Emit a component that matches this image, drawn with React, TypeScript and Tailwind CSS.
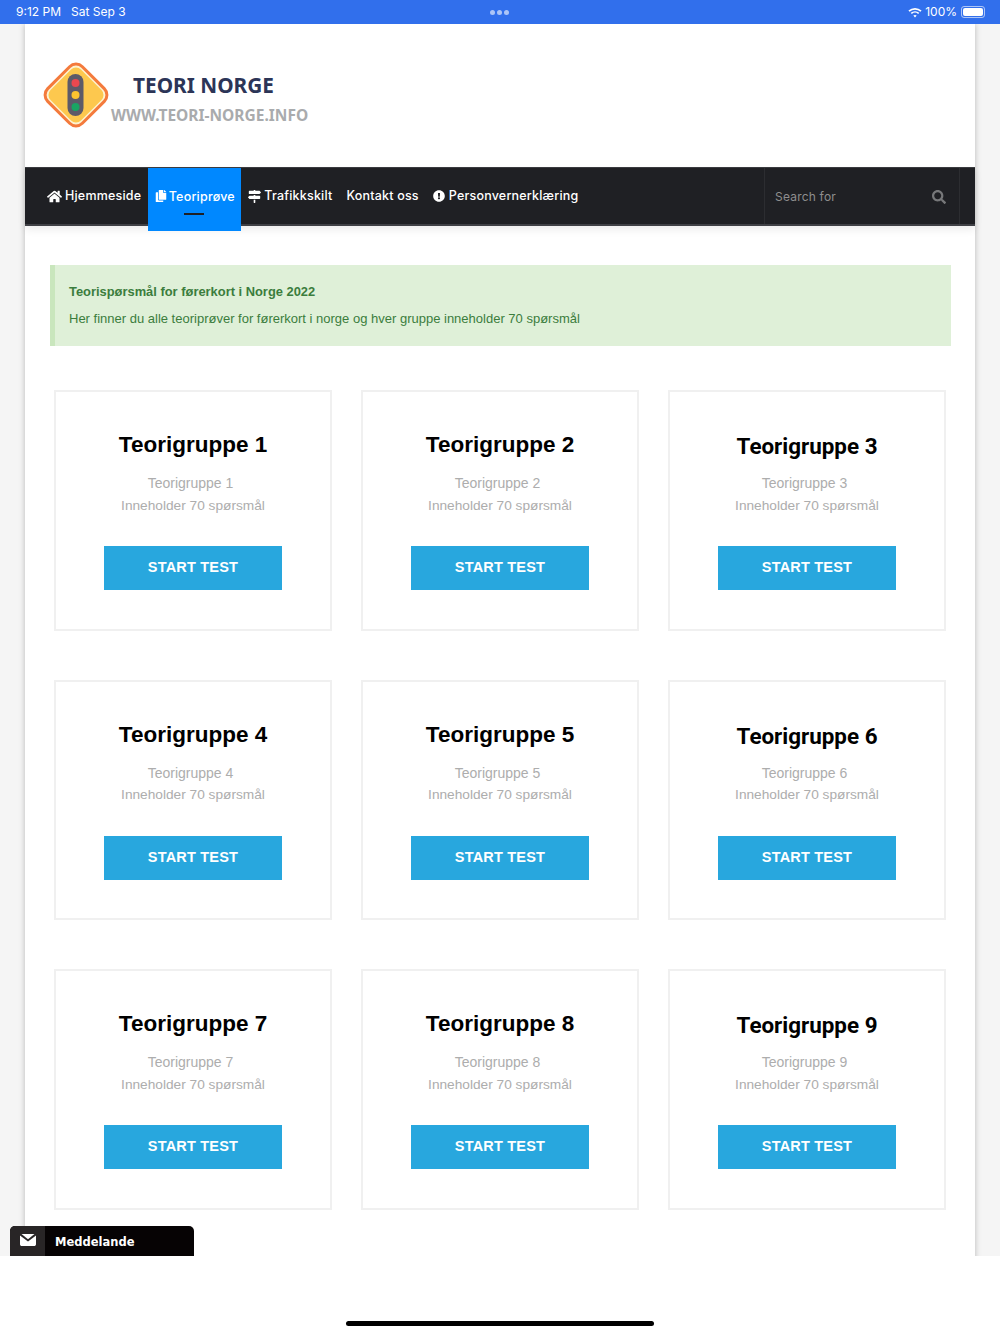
import React from 'react';
import { FaHome, FaCopy, FaMapSigns, FaExclamationCircle, FaSearch } from 'react-icons/fa';

const groups = [1, 2, 3, 4, 5, 6, 7, 8, 9];

const Logo = () => (
  <svg width="68" height="66" viewBox="0 0 68 66">
    <rect x="9.5" y="8.5" width="49" height="49" rx="9" transform="rotate(45 34 33)" fill="#fdf3d0" stroke="#f47a3c" strokeWidth="3" />
    <rect x="12.5" y="11.5" width="43" height="43" rx="7" transform="rotate(45 34 33)" fill="#fdc84e" />
    <rect x="25.5" y="12" width="16" height="42" rx="8" fill="#5d5a68" />
    <circle cx="33.5" cy="21" r="4" fill="#e8484f" />
    <circle cx="33.5" cy="33" r="4" fill="#fcc42f" />
    <circle cx="33.5" cy="45" r="4" fill="#19a463" />
  </svg>
);

const Card = ({ n, col }: { n: number; col: number }) => (
  <div className="w-[278px] h-[240.5px] border-2 border-[#f0f0f0] bg-white flex flex-col items-center">
    <h2
      className={
        col === 2
          ? "mt-[28px] h-[52px] leading-[52px] text-[22.4px] font-bold text-black font-['Roboto',sans-serif]"
          : "mt-[27px] h-[53px] leading-[52px] text-[22.5px] font-bold text-black font-['Liberation_Sans',sans-serif]"
      }
    >
      Teorigruppe {n}
    </h2>
    <p className="pr-[5px] text-[14px] leading-[22.5px] text-[#adadad] font-['Liberation_Sans',sans-serif]">Teorigruppe {n}</p>
    <p className="text-[13.7px] leading-[22.5px] text-[#adadad] font-['Liberation_Sans',sans-serif]">Inneholder 70 spørsmål</p>
    <button className="mt-[29px] w-[178px] h-[44px] bg-[#28a7de] text-white text-[14.5px] tracking-[0.2px] font-bold font-['Liberation_Sans',sans-serif]">START TEST</button>
  </div>
);

export default function App() {
  return (
    <div className="w-[1000px] h-[1334px] bg-white relative overflow-hidden font-['Inter',sans-serif]">
      <div className="h-[24px] bg-[#316fec] text-white text-[12px] flex items-center justify-between pl-[16px] pr-[15px] relative">
        <div className="flex gap-[10px]">
          <span>9:12 PM</span>
          <span>Sat Sep 3</span>
        </div>
        <div className="absolute left-[490px] top-[10px] flex gap-[2px]">
          <span className="w-[5px] h-[5px] rounded-full bg-white/60" />
          <span className="w-[5px] h-[5px] rounded-full bg-white/60" />
          <span className="w-[5px] h-[5px] rounded-full bg-white/60" />
        </div>
        <div className="flex items-center gap-[3px]">
          <svg width="14" height="11" viewBox="0 0 14 11" fill="none" stroke="white" strokeWidth="1.7">
            <path d="M1 4.2C4.4 1 9.6 1 13 4.2" />
            <path d="M3.3 6.4C5.4 4.5 8.6 4.5 10.7 6.4" />
            <path d="M7 10.5L5.3 8.6C6.3 7.8 7.7 7.8 8.7 8.6Z" fill="white" stroke="none" />
          </svg>
          <span>100%</span>
          <div className="ml-[1px] w-[24px] h-[12px] rounded-[3px] border border-white/60 p-[1px] flex">
            <div className="flex-1 rounded-[2px] bg-white" />
          </div>
        </div>
      </div>

      <div className="h-[1232px] bg-[#f5f5f5] overflow-hidden">
        <div className="w-[950px] h-[1240px] mx-auto bg-white shadow-[0_0_6px_rgba(0,0,0,0.25)]">
          <div className="h-[143px] flex relative">
            <div className="ml-[17px] mt-[38px]"><Logo /></div>
            <div className="absolute left-[86px] top-[46px] w-[198px] font-['Noto_Sans',sans-serif]">
              <div className="ml-[22px] text-[20.8px] leading-[30px] font-bold text-[#2c3557]">TEORI NORGE</div>
              <div className="text-[15.5px] leading-[30px] font-bold text-[#a9abad] whitespace-nowrap">WWW.TEORI-NORGE.INFO</div>
            </div>
          </div>

          <nav className="h-[59px] bg-[#1f2024] border-t border-[#3a3b3f] border-b-2 border-b-[#3f4045] flex relative shadow-[0_4px_8px_rgba(0,0,0,0.07)] text-white text-[12.5px] font-medium tracking-[0.2px]">
            <div className="ml-[22px] pt-[1px] flex items-center gap-[3px] h-full"><FaHome className="text-[15px] -mt-[1px]" />Hjemmeside</div>
            <div className="ml-[7px] w-[93px] h-[63px] bg-[#0088ff] flex items-start justify-center gap-[2px] relative pt-[20px]">
              <FaCopy className="text-[12px] mt-[2px]" />Teoriprøve
              <span className="absolute left-[36px] top-[45px] w-[20px] h-[2px] bg-[#1f2024]" />
            </div>
            <div className="ml-[7px] pt-[1px] flex items-center gap-[3px] h-full"><FaMapSigns className="text-[13px] -mt-[1px]" />Trafikkskilt</div>
            <div className="ml-[14px] pt-[1px] flex items-center h-full">Kontakt oss</div>
            <div className="ml-[14px] pt-[1px] flex items-center gap-[4px] h-full"><FaExclamationCircle className="text-[12px] -mt-[1px]" />Personvernerklæring</div>
            <div className="absolute left-[739px] top-0 w-[196px] h-full border-x border-[#2c2d31] flex items-center justify-between pl-[10px] pr-[13px] pt-[1px] text-[12px] text-[#8e8e8e] font-normal">
              <span>Search for</span>
              <FaSearch className="text-[14px] text-[#77787a]" />
            </div>
          </nav>

          <div className="mx-[24.5px] mt-[39px] h-[81px] bg-[#dff0d8] border-l-[5px] border-[#c9e6bd] text-[#3b7d3d] font-['Liberation_Sans',sans-serif] text-[13px] pl-[14.5px] pt-[13px]">
            <div className="font-bold text-[12.9px] leading-[27px]">Teorispørsmål for førerkort i Norge 2022</div>
            <div className="leading-[27px]">Her finner du alle teoriprøver for førerkort i norge og hver gruppe inneholder 70 spørsmål</div>
          </div>

          <div className="mt-[44px] mx-[29px] grid grid-cols-3 gap-x-[29px] gap-y-[49px]">
            {groups.map((n, i) => (
              <Card key={n} n={n} col={i % 3} />
            ))}
          </div>
        </div>
      </div>

      <div className="absolute left-[10px] top-[1226px] w-[184px] h-[30px] bg-[#060304] rounded-t-[5px] overflow-hidden flex items-center text-white text-[11.5px] font-bold font-['DejaVu_Sans',sans-serif]">
        <div className="w-[35px] h-full bg-[#282526] flex items-center justify-center pb-[2px]">
          <svg width="16" height="12" viewBox="0 0 16 12" fill="white">
            <path d="M1.5 0H14.5L8 5.2Z" />
            <path d="M0 1.4V10.2C0 11.2.8 12 1.8 12H14.2C15.2 12 16 11.2 16 10.2V1.4L8 7.4Z" />
          </svg>
        </div>
        <span className="ml-[10px] pt-[4px]">Meddelande</span>
      </div>

      <div className="absolute left-[346px] top-[1321px] w-[308px] h-[5px] rounded-full bg-black" />
    </div>
  );
}
